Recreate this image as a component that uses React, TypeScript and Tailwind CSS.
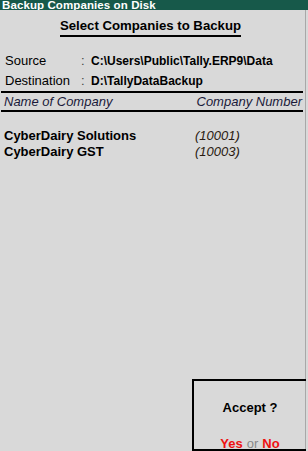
export default function App() {
  return (
    <div className="w-[308px] h-[451px] overflow-hidden bg-[#d9d9d9] flex flex-col font-['Liberation_Sans',Arial,sans-serif] text-black">
      {/* Title bar */}
      <div className="h-[10px] bg-[#17594a] overflow-hidden flex items-center shrink-0">
        <span className="pl-[2px] text-[11.5px] leading-[10px] font-bold text-white tracking-[0.1px]">
          Backup Companies on Disk
        </span>
      </div>

      <div className="flex-1 flex border-r border-[#a8a8a8] mr-[2px]">
        <div className="flex-1 flex flex-col">
          {/* Heading */}
          <div className="flex justify-center pt-[8px] pr-[4px]">
            <span className="text-[13.2px] leading-[16px] font-bold border-b-2 border-black pb-[1px]">
              Select Companies to Backup
            </span>
          </div>

          {/* Source / Destination */}
          <div className="mt-[16px] pl-[5px] flex flex-col gap-[4px]">
            <div className="flex items-center h-[16px]">
              <span className="w-[76px] text-[13px]">Source</span>
              <span className="w-[10px] text-[13px] text-[#444]">:</span>
              <span className="text-[12px] font-bold">C:\Users\Public\Tally.ERP9\Data</span>
            </div>
            <div className="flex items-center h-[16px]">
              <span className="w-[76px] text-[13px]">Destination</span>
              <span className="w-[10px] text-[13px] text-[#444]">:</span>
              <span className="text-[12px] font-bold">D:\TallyDataBackup</span>
            </div>
          </div>

          {/* Column header */}
          <div className="mt-[2px] ml-[1px] mr-[2px] border-t-2 border-b-2 border-black flex justify-between items-center h-[21px] pl-[3px] pr-[1px] text-[13px] italic text-[#1a1a3a]">
            <span>Name of Company</span>
            <span>Company Number</span>
          </div>

          {/* Companies */}
          <div className="mt-[16px] pl-[4px] flex flex-col">
            <div className="flex h-[16px] items-center">
              <span className="w-[191px] text-[13px] font-bold">CyberDairy Solutions</span>
              <span className="text-[13px] italic text-[#2a1a10]">(10001)</span>
            </div>
            <div className="flex h-[16px] items-center">
              <span className="w-[191px] text-[13px] font-bold">CyberDairy GST</span>
              <span className="text-[13px] italic text-[#2a1a10]">(10003)</span>
            </div>
          </div>

          <div className="flex-1" />

          {/* Accept box */}
          <div className="self-end w-[114px] h-[72px] border-2 border-black border-r-0 -mr-[1px] flex flex-col items-center">
            <span className="mt-[17px] text-[13px] font-bold">Accept ?</span>
            <div className="mt-[16px] flex items-baseline gap-[4px] text-[13px] font-bold">
              <span className="text-[#ee1111]">Yes</span>
              <span className="font-normal text-[#888]">or</span>
              <span className="text-[#ee1111]">No</span>
            </div>
          </div>
        </div>
      </div>
    </div>
  )
}
